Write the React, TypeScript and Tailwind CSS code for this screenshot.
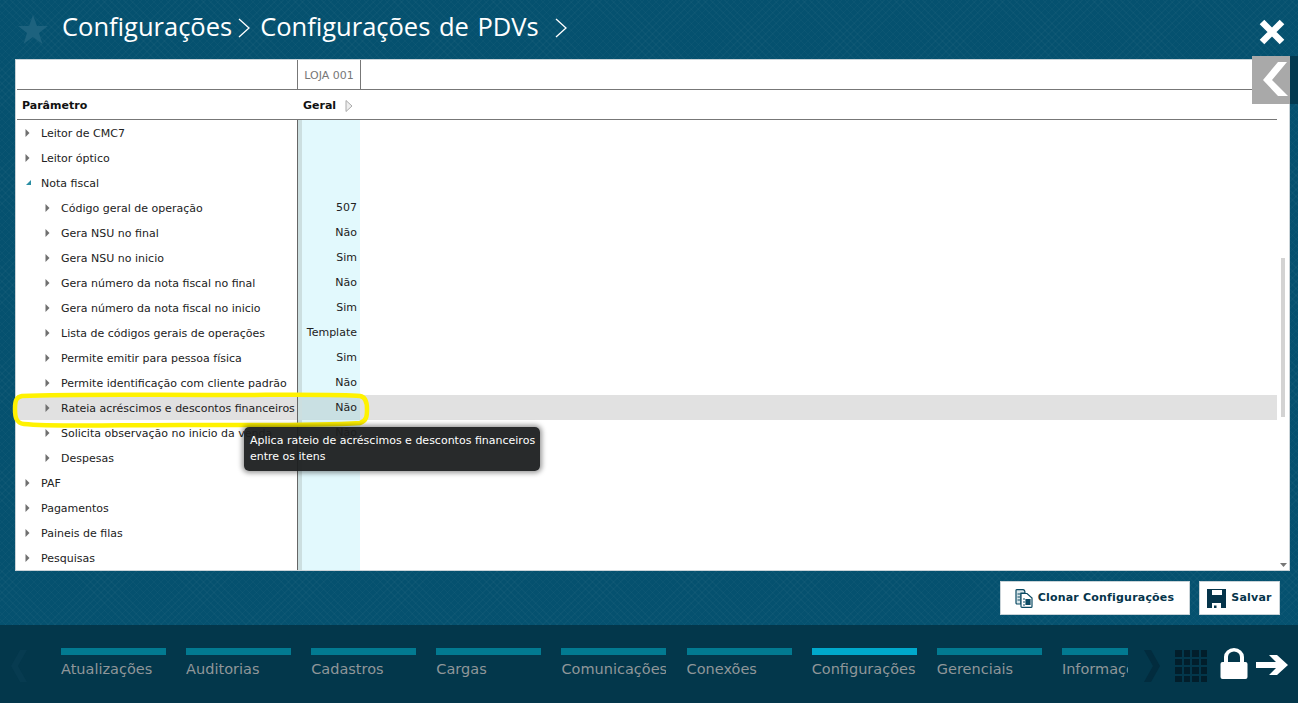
import React from "react";

const rows: [number, string, string, ("r" | "d")?][] = [
  [0, "Leitor de CMC7", ""],
  [0, "Leitor óptico", ""],
  [0, "Nota fiscal", "", "d"],
  [1, "Código geral de operação", "507"],
  [1, "Gera NSU no final", "Não"],
  [1, "Gera NSU no inicio", "Sim"],
  [1, "Gera número da nota fiscal no final", "Não"],
  [1, "Gera número da nota fiscal no inicio", "Sim"],
  [1, "Lista de códigos gerais de operações", "Template"],
  [1, "Permite emitir para pessoa física", "Sim"],
  [1, "Permite identificação com cliente padrão", "Não"],
  [1, "Rateia acréscimos e descontos financeiros", "Não"],
  [1, "Solicita observação no inicio da venda", "Não"],
  [1, "Despesas", ""],
  [0, "PAF", ""],
  [0, "Pagamentos", ""],
  [0, "Paineis de filas", ""],
  [0, "Pesquisas", ""],
];

const tabs = ["Atualizações", "Auditorias", "Cadastros", "Cargas", "Comunicações", "Conexões", "Configurações", "Gerenciais", "Informações"];

function Row({ level, label, value, kind }: { level: number; label: string; value: string; kind?: "r" | "d" }) {
  const active = label.startsWith("Rateia");
  return (
    <div className={`flex h-[25px] shrink-0 items-center ${active ? "bg-[#e1e1e1]" : ""}`}>
      <div className={`flex h-full w-[280px] shrink-0 items-center ${level ? "pl-[28px]" : "pl-[8px]"}`}>
        {kind === "d" ? (
          <svg width="7" height="7" viewBox="0 0 7 7" className="mr-[9px] shrink-0"><path d="M6 1V6H1Z" fill="#2b8ea3" /></svg>
        ) : (
          <svg width="5" height="8" viewBox="0 0 5 8" className="mr-[11px] shrink-0"><path d="M0.5 0L4.5 4L0.5 8Z" fill="#6f6f6f" /></svg>
        )}
        <span className="mt-[4px] whitespace-nowrap">{label}</span>
      </div>
      <div className={`flex h-full w-[63px] shrink-0 items-center justify-end border-l border-[#666] pr-[3px] ${active ? "bg-[#c9e0e3]" : "bg-[#e2f9fd]"}`}>
        <span className="mt-[2px]">{value}</span>
      </div>
    </div>
  );
}

export default function App() {
  return (
    <div className="relative flex h-[703px] w-[1298px] flex-col overflow-hidden bg-[#05516f] bg-[repeating-linear-gradient(45deg,#0000_0_4px,#ffffff06_4px_5px),repeating-linear-gradient(-45deg,#0000_0_4px,#ffffff06_4px_5px)] font-['DejaVu_Sans',sans-serif]">
      <header className="flex h-[59px] shrink-0 items-center pl-[17px]">
        <svg width="32" height="32" viewBox="0 0 32 32"><path d="M16 1L20 12H31L22 19L25.500 30L16 23L6.500 30L10 19L1 12H12Z" fill="#1d627e" /></svg>
        <div className="ml-[13px] flex -translate-y-[3px] items-center font-['Open_Sans',sans-serif] text-[25.500px] text-white">
          <span>Configurações</span>
          <svg width="14" height="20" viewBox="0 0 14 20" className="ml-[5px] mr-[9px] mt-[2px]"><path d="M2 1L12 10L2 19" fill="none" stroke="#fff" strokeWidth="1.300" /></svg>
          <span className="[word-spacing:2px]">Configurações de PDVs</span>
          <svg width="14" height="20" viewBox="0 0 14 20" className="ml-[15px] mt-[2px]"><path d="M2 1L12 10L2 19" fill="none" stroke="#fff" strokeWidth="1.300" /></svg>
        </div>
        <svg width="26" height="26" viewBox="0 0 26 26" className="ml-auto mr-[13px] mt-[5px]"><path d="M3 3L23 23M23 3L3 23" stroke="#fff" strokeWidth="6.500" /></svg>
      </header>

      <main className="ml-[15px] flex h-[512px] w-[1275px] shrink-0 flex-col border border-[#c9d3d8] bg-white text-[11px] text-[#222]">
        <div className="ml-[1px] flex h-[30px] shrink-0 border-b border-[#777]">
          <div className="w-[280px] shrink-0" />
          <div className="flex w-[64px] shrink-0 items-center justify-center border-x border-[#777] text-[#777]"><span className="mt-[3px]">LOJA 001</span></div>
        </div>
        <div className="ml-[1px] mr-[12px] flex h-[30px] shrink-0 items-center border-b border-[#777] font-bold text-[#111]">
          <div className="w-[280px] shrink-0 pl-[5px]"><span className="relative top-[2px]">Parâmetro</span></div>
          <div className="pl-[6px]"><span className="relative top-[2px]">Geral</span></div>
          <svg width="8" height="12" viewBox="0 0 8 12" className="ml-[9px] mt-[2px]"><path d="M1 .5L7 6L1 11.500Z" fill="#eee" stroke="#aaa" /></svg>
        </div>
        <div className="relative ml-[1px] mr-[12px] flex-1 overflow-hidden">
          {rows.map(([l, t, v, k]) => <Row key={t} level={l} label={t} value={v} kind={k} />)}
          <div className="pointer-events-none absolute left-[281px] top-0 h-full w-[4px] bg-[#ccdfe0]" />
        </div>

        <div className="absolute left-[1281px] top-[258px] h-[159px] w-[4px] bg-[#d3d3d3]" />
        <svg width="7" height="4" viewBox="0 0 7 4" className="absolute left-[1280px] top-[563px]"><path d="M0 0H7L3.500 4Z" fill="#777" /></svg>
      </main>

      <div className="flex h-[54px] shrink-0 items-start justify-end gap-[9px] pr-[18px] pt-[10px] text-[11px] font-bold text-[#05344a]">
        <button className="flex h-[34px] w-[190px] items-center justify-center gap-[5px] border border-[#c9d3d8] bg-white pr-[2px] tracking-[0.2px]">
          <svg width="19" height="19" viewBox="0 0 19 19" fill="none" stroke="#0b4a63" strokeWidth="1.200">
            <path d="M2 1.500C2 .8 2.500.6 3 .6H9C10.500.6 11 2 11 4H7V15H3C2.300 15 2 14.500 2 14Z" fill="#d9e6ea" />
            <path d="M7 4.500H13L18 9V17.500C18 18 17.500 18.400 17 18.400H8C7.400 18.400 7 18 7 17.500Z" fill="#fff" />
            <path d="M3.500 5H6M3.500 8H6M3.500 11H6M9 10H11M9 13H11M9 16H11" />
            <path d="M12 10.500H16V15.500H12Z" fill="#0b4a63" />
          </svg>
          Clonar Configurações
        </button>
        <button className="flex h-[34px] w-[81px] items-center justify-center gap-[5px] border border-[#c9d3d8] bg-white tracking-[0.2px]">
          <svg width="19" height="19" viewBox="0 0 19 19"><path fillRule="evenodd" d="M0 0H19V19H0ZM5 1V6H15V1ZM5 14V19H14V14Z" fill="#05344a" /><path d="M7 16.500H9.500V19H7Z" fill="#05344a" /></svg>
          Salvar
        </button>
      </div>

      <footer className="flex h-[78px] shrink-0 items-start overflow-hidden bg-[#03374b]">
        <div className="flex h-full w-[61px] shrink-0 items-start pl-[10px] pt-[24px]">
          <svg width="18" height="34" viewBox="0 0 18 34"><path d="M17 1H10L1 17L10 33H17L8 17Z" fill="#073b50" /></svg>
        </div>
        <nav className="flex w-[1067px] shrink-0 gap-[20.120px] overflow-hidden pt-[23px]">
          {tabs.map((t) => {
            const on = t === "Configurações";
            return (
              <div key={t} className="flex w-[105px] shrink-0 flex-col">
                <div className={`h-[7px] ${on ? "bg-[#00a9cc]" : "bg-[#027a91]"}`} />
                <div className="mt-[4px] overflow-hidden whitespace-nowrap text-[14.500px] leading-[20px] text-[#8f9699]">{t}</div>
              </div>
            );
          })}
        </nav>
        <div className="flex h-full flex-1 items-start bg-[#03374b] pl-[15px] pt-[24px]">
          <svg width="18" height="34" viewBox="0 0 18 34"><path d="M1 1H8L17 17L8 33H1L10 17Z" fill="#022c3e" /></svg>
          <div className="ml-[14px] mt-[1px] grid grid-cols-4 gap-[2px]">
            {Array.from({ length: 16 }, (_, i) => <div key={i} className="h-[6.500px] w-[6.500px] bg-[#021e2b]" />)}
          </div>
          <svg width="28" height="32" viewBox="0 0 28 32" className="ml-[13px] -mt-[1px]"><path fillRule="evenodd" d="M4 14V9a10 9 0 0 1 20 0v5h1.500a2 2 0 0 1 2 2v13a2 2 0 0 1-2 2H2.500a2 2 0 0 1-2-2V16a2 2 0 0 1 2-2ZM8 14H20V9a6 5.500 0 0 0-12 0Z" fill="#fff" /></svg>
          <svg width="33" height="24" viewBox="0 0 33 24" className="ml-[8px] mt-[4px]"><path d="M0 9H20L13 2H21L32 12L21 22H13L20 15H0Z" fill="#fff" /></svg>
        </div>
      </footer>

      <div className="absolute left-[1252px] top-[56px] flex h-[48px] w-[46px]">
        <div className="relative h-full w-[38px] bg-[#a9a9a9]">
          <svg width="26" height="36" viewBox="0 0 26 36" className="absolute left-[11px] top-[6px]"><path d="M24 0H15L0 18L15 34H25L9 18Z" fill="#fff" /></svg>
        </div>
        <div className="h-full flex-1 bg-[#033a50]" />
      </div>

      <svg width="358" height="38" viewBox="0 0 358 38" className="pointer-events-none absolute left-[12px] top-[391px]">
        <path d="M10 5C60 3 130 4 200 4S330 3 348 5C354 6 355 12 355 18S355 30 348 32C300 35 240 34 170 34S40 36 12 33C4 32 3 26 3 18S4 6 10 5Z" fill="none" stroke="#fff200" strokeWidth="4.500" />
      </svg>

      <div className="absolute left-[244px] top-[427px] h-[44px] w-[296px] whitespace-nowrap rounded-[5px] bg-[#1c1f20]/95 px-[6px] pt-[6px] text-[11px] leading-[16px] text-white shadow-[0_0_5px_2px_rgba(0,0,0,0.4)]">
        Aplica rateio de acréscimos e descontos financeiros<br />entre os itens
      </div>
    </div>
  );
}
